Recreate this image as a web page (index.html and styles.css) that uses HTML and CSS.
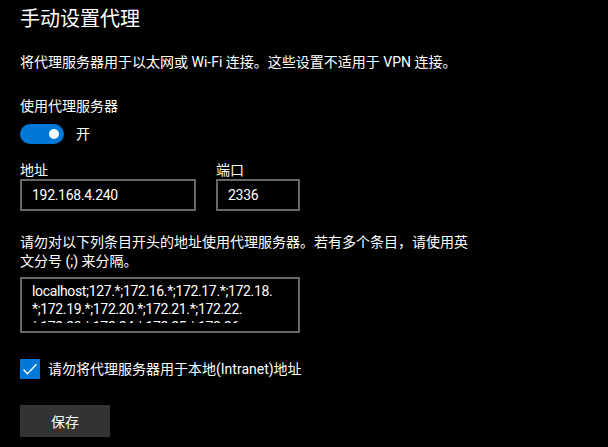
FILE: index.html
```html
<!DOCTYPE html>
<html lang="zh-CN">
<head>
<meta charset="utf-8">
<title>手动设置代理</title>
<link rel="stylesheet" href="styles.css">
</head>
<body>
<main class="page">
  <h1 class="title">手动设置代理</h1>
  <p class="desc">将代理服务器用于以太网或 Wi-Fi 连接。这些设置不适用于 VPN 连接。</p>
  <div class="label use-label">使用代理服务器</div>
  <div class="toggle-row">
    <span class="toggle"><span class="knob"></span></span>
    <span class="toggle-text">开</span>
  </div>
  <div class="fields">
    <div class="field">
      <div class="label field-label">地址</div>
      <div class="input input-addr">192.168.4.240</div>
    </div>
    <div class="field">
      <div class="label field-label">端口</div>
      <div class="input input-port">2336</div>
    </div>
  </div>
  <p class="exceptions">请勿对以下列条目开头的地址使用代理服务器。若有多个条目，请使用英文分号 (;) 来分隔。</p>
  <div class="textarea">
    <div class="textarea-inner">
      <div class="tline">localhost;127.*;172.16.*;172.17.*;172.18.</div>
      <div class="tline">*;172.19.*;172.20.*;172.21.*;172.22.</div>
      <div class="tline">*;172.23.*;172.24.*;172.25.*;172.26.</div>
    </div>
  </div>
  <div class="check-row">
    <span class="checkbox">
      <svg width="20" height="20" viewBox="0 0 20 20"><polyline points="3.5,10.5 7.5,14.8 16.5,5.2" fill="none" stroke="#fff" stroke-width="1.4"/></svg>
    </span>
    <span class="check-text">请勿将代理服务器用于本地(Intranet)地址</span>
  </div>
  <button class="save">保存</button>
</main>
</body>
</html>
```

FILE: styles.css
```css
html, body {
  margin: 0;
  padding: 0;
  background: #000;
}
body {
  color: #fff;
  font-family: Roboto, "Noto Sans CJK SC", sans-serif;
  font-size: 14px;
}
.page {
  padding: 5px 20px 0 20px;
}
.title {
  margin: 0;
  font-size: 20px;
  font-weight: normal;
  line-height: 28px;
}
.desc {
  margin: 19px 0 0 0;
  line-height: 20px;
}
.label {
  line-height: 20px;
}
.use-label {
  margin-top: 24px;
}
.toggle-row {
  margin-top: 8px;
  display: flex;
  align-items: center;
  height: 20px;
}
.toggle {
  width: 44px;
  height: 20px;
  border-radius: 10px;
  background: #0078d7;
  display: flex;
  align-items: center;
  justify-content: flex-end;
  padding-right: 5px;
  box-sizing: border-box;
}
.knob {
  width: 10px;
  height: 10px;
  border-radius: 50%;
  background: #fff;
}
.toggle-text {
  margin-left: 12px;
  line-height: 20px;
}
.fields {
  margin-top: 17px;
  display: flex;
  gap: 20px;
}
.field-label {
  line-height: 18px;
}
.input {
  height: 32px;
  box-sizing: border-box;
  border: 2px solid #666;
  padding: 0 10px;
  line-height: 28px;
  letter-spacing: -0.3px;
}
.input-addr { width: 176px; }
.input-port { width: 84px; }
.exceptions {
  margin: 22px 0 0 0;
  max-width: 456px;
  line-height: 19px;
}
.textarea {
  margin-top: 6px;
  width: 280px;
  height: 56px;
  box-sizing: border-box;
  border: 2px solid #666;
  padding: 3px 10px 0 10px;
  overflow: hidden;
}
.textarea-inner {
  height: 41px;
  overflow: hidden;
  line-height: 18px;
}
.tline {
  white-space: nowrap;
  letter-spacing: -0.35px;
}
.check-row {
  margin-top: 26px;
  display: flex;
  align-items: center;
  height: 20px;
}
.checkbox {
  width: 20px;
  height: 20px;
  background: #0078d7;
  display: block;
}
.checkbox svg { display: block; }
.check-text {
  margin-left: 8px;
  line-height: 20px;
}
.save {
  margin-top: 26px;
  display: block;
  width: 90px;
  height: 32px;
  border: none;
  background: #333;
  color: #fff;
  font-family: inherit;
  font-size: 14px;
  padding: 0;
}
```
